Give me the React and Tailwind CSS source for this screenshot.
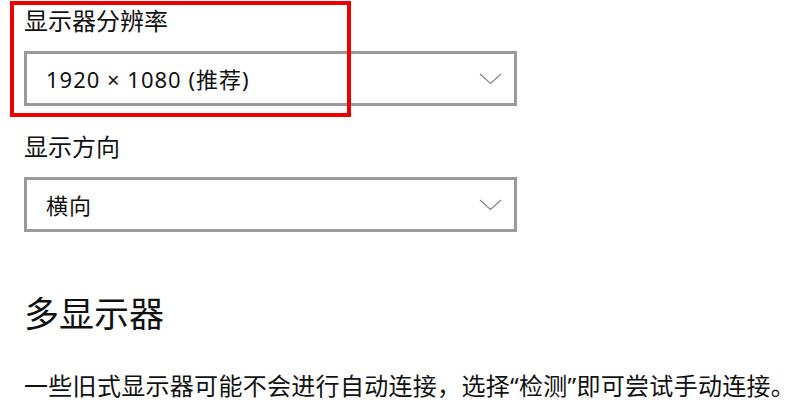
import React from "react";

const font = { fontFamily: '"Noto Sans", "Noto Sans CJK SC", sans-serif' };

function Chevron() {
  return (
    <svg width="23" height="12" viewBox="0 0 23 12" fill="none" className="shrink-0">
      <path d="M1 1 L11.5 10.5 L22 1" stroke="#858585" strokeWidth="1.25" fill="none" />
    </svg>
  );
}

function Select({ children }) {
  return (
    <div className="flex h-[55px] w-[493px] items-center justify-between border-[3px] border-[#9a9a9a] bg-white pl-[19px] pr-[12px]">
      <span className="text-[22px] leading-[30px] tracking-[1px] text-[#111]">{children}</span>
      <Chevron />
    </div>
  );
}

export default function App() {
  return (
    <div className="relative h-[411px] w-[800px] overflow-hidden bg-white" style={font}>
      <div className="flex flex-col pl-[24px] pt-[4px] text-[#111]">
        <div className="text-[24px] leading-[34px]">显示器分辨率</div>
        <div className="mt-[13px]">
          <Select>1920 × 1080 (推荐)</Select>
        </div>
        <div className="mt-[24px] text-[24px] leading-[34px]">显示方向</div>
        <div className="mt-[13px]">
          <Select>横向</Select>
        </div>
        <div className="mt-[59px] text-[35px] leading-[46px]">多显示器</div>
        <div className="mt-[32px] whitespace-nowrap text-[24px] leading-[34px] tracking-[0.3px]">
          一些旧式显示器可能不会进行自动连接，选择“检测”即可尝试手动连接。
        </div>
      </div>
      <div className="absolute left-[10px] top-[1px] h-[116px] w-[341px] border-4 border-[#ee0000]" />
    </div>
  );
}
